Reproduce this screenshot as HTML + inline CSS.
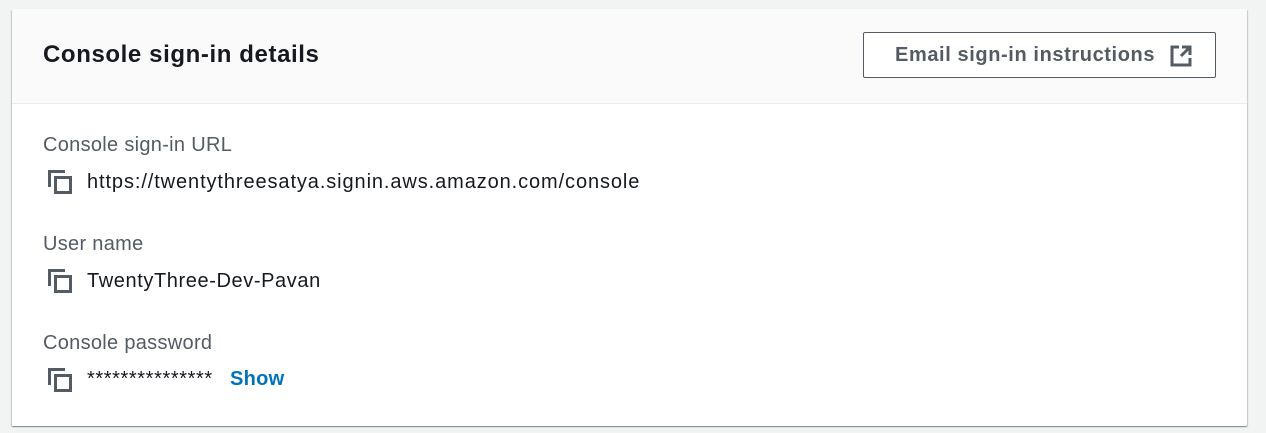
<!DOCTYPE html>
<html><head><style>
*{margin:0;padding:0;box-sizing:border-box}
body{width:1266px;height:433px;background:#f2f3f3;font-family:"Liberation Sans",sans-serif;position:relative;overflow:hidden}
.card{position:absolute;left:12px;top:9px;width:1235px;height:417px;background:#fff;border-radius:1px;box-shadow:0 1px 1px rgba(0,28,36,.3),1px 1px 1px rgba(0,28,36,.15),-1px 1px 1px rgba(0,28,36,.15)}
.hdr{height:95px;background:#fafafa;border-bottom:1px solid #eaeded;position:relative}
h2{position:absolute;left:31px;top:32px;font-size:24px;letter-spacing:0.6px;font-weight:bold;color:#16191f}
.btn{position:absolute;left:851px;top:23px;width:353px;height:46px;border:1px solid #545b64;border-radius:2px;background:#fff;color:#545b64;font-weight:bold;font-size:20px;letter-spacing:0.6px;padding:11px 0 0 31px;white-space:nowrap}
.btn svg{position:absolute;left:306px;top:12px}
.lbl{position:absolute;left:31px;font-size:20px;letter-spacing:0.3px;color:#545b64}
.val{position:absolute;left:75px;font-size:20px;letter-spacing:0.9px;color:#16191f;white-space:nowrap}
.ic{position:absolute;left:36px}
.show{color:#0073bb;font-weight:bold;position:absolute;left:143px;letter-spacing:0.3px}
</style></head><body>
<div class="card">
<div class="hdr"><h2>Console sign-in details</h2>
<div class="btn">Email sign-in instructions<svg width="22" height="22" viewBox="0 0 22 22" fill="none" stroke="#545b64" stroke-width="3"><path d="M9 2H2v18h18v-7"/><path d="M12 2h8v8M20 2l-9 9"/></svg></div></div>
<div class="lbl" style="top:125px">Console sign-in URL</div>
<svg class="ic" style="top:161px" width="24" height="24" viewBox="0 0 24 24" fill="none" stroke="#545b64" stroke-width="3"><path d="M1.5 17V1.5H17"/><rect x="7.5" y="7.5" width="15" height="15"/></svg>
<div class="val" style="top:162px">https://twentythreesatya.signin.aws.amazon.com/console</div>
<div class="lbl" style="top:224px">User name</div>
<svg class="ic" style="top:260px" width="24" height="24" viewBox="0 0 24 24" fill="none" stroke="#545b64" stroke-width="3"><path d="M1.5 17V1.5H17"/><rect x="7.5" y="7.5" width="15" height="15"/></svg>
<div class="val" style="top:261px;letter-spacing:0.6px">TwentyThree-Dev-Pavan</div>
<div class="lbl" style="top:323px">Console password</div>
<svg class="ic" style="top:359px" width="24" height="24" viewBox="0 0 24 24" fill="none" stroke="#545b64" stroke-width="3"><path d="M1.5 17V1.5H17"/><rect x="7.5" y="7.5" width="15" height="15"/></svg>
<div class="val" style="top:359px;letter-spacing:0.6px">***************<span class="show">Show</span></div>
</div>
</body></html>
